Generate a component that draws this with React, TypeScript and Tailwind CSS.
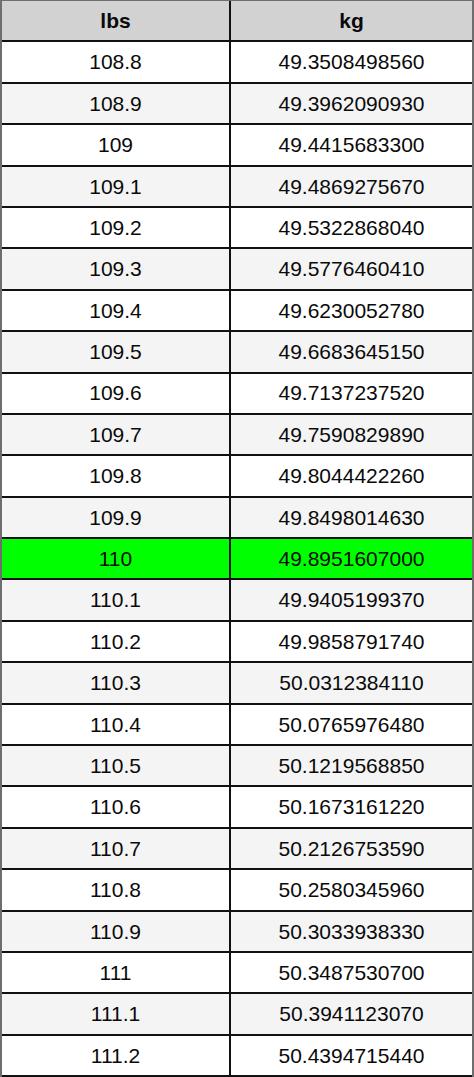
const rows: [string, string][] = [
  ["108.8", "49.3508498560"],
  ["108.9", "49.3962090930"],
  ["109", "49.4415683300"],
  ["109.1", "49.4869275670"],
  ["109.2", "49.5322868040"],
  ["109.3", "49.5776460410"],
  ["109.4", "49.6230052780"],
  ["109.5", "49.6683645150"],
  ["109.6", "49.7137237520"],
  ["109.7", "49.7590829890"],
  ["109.8", "49.8044422260"],
  ["109.9", "49.8498014630"],
  ["110", "49.8951607000"],
  ["110.1", "49.9405199370"],
  ["110.2", "49.9858791740"],
  ["110.3", "50.0312384110"],
  ["110.4", "50.0765976480"],
  ["110.5", "50.1219568850"],
  ["110.6", "50.1673161220"],
  ["110.7", "50.2126753590"],
  ["110.8", "50.2580345960"],
  ["110.9", "50.3033938330"],
  ["111", "50.3487530700"],
  ["111.1", "50.3941123070"],
  ["111.2", "50.4394715440"],
];

export default function App() {
  return (
    <div className="flex h-[1077px] w-[474px] flex-col border-x-2 border-t border-[#6e6e6e] bg-white font-['Liberation_Sans',Arial,sans-serif] text-[21px] text-[#0a0a0a]">
      {/* header */}
      <div className="flex flex-1 border-b-2 border-[#111] bg-[#d2d2d2] font-bold">
        <div className="flex w-[229px] items-center justify-center border-r-2 border-[#111]">
          lbs
        </div>
        <div className="flex flex-1 items-center justify-center">kg</div>
      </div>

      {rows.map(([lbs, kg], i) => {
        const hit = lbs === "110";
        const bg = hit ? "bg-[#00ff00]" : i % 2 === 1 ? "bg-[#f4f4f4]" : "bg-white";
        return (
          <div
            key={lbs}
            className={`flex flex-1 border-b-2 border-[#111] ${bg}`}
          >
            <div className="flex w-[229px] items-center justify-center border-r-2 border-[#111]">
              {lbs}
            </div>
            <div className="flex flex-1 items-center justify-center">{kg}</div>
          </div>
        );
      })}
    </div>
  );
}
